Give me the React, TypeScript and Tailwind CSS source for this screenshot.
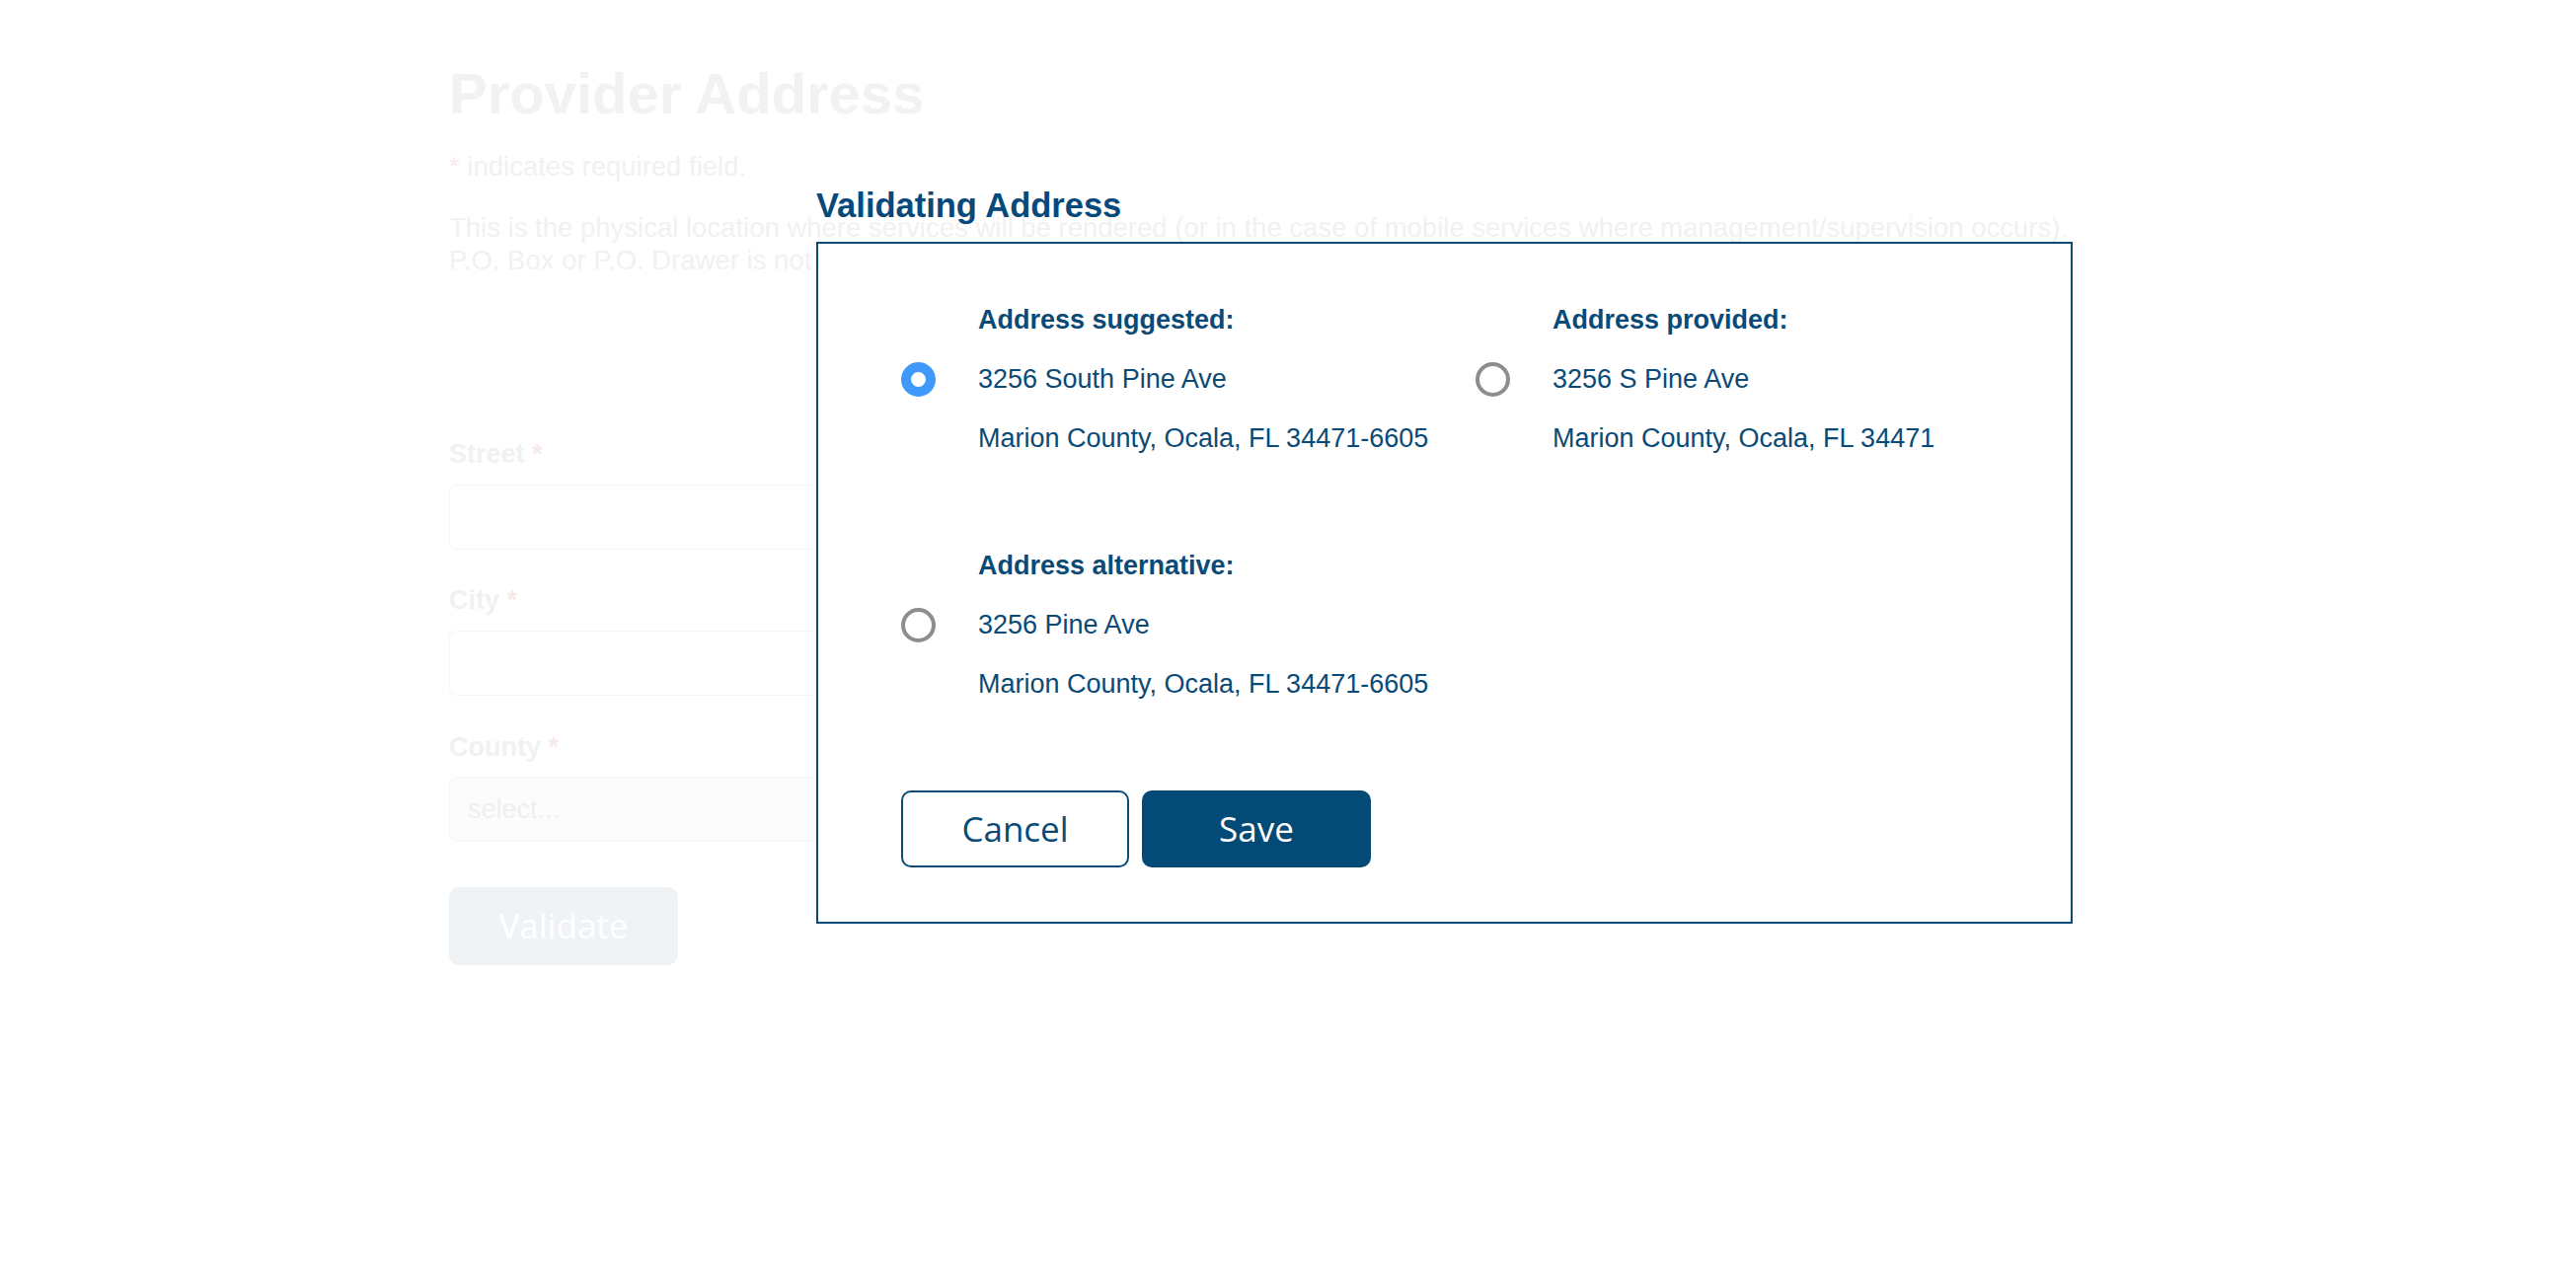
import { useState } from "react";

const addresses = [
  {
    key: "suggested",
    title: "Address suggested:",
    street: "3256 South Pine Ave",
    city: "Marion County, Ocala, FL 34471-6605",
  },
  {
    key: "provided",
    title: "Address provided:",
    street: "3256 S Pine Ave",
    city: "Marion County, Ocala, FL 34471",
  },
  {
    key: "alternative",
    title: "Address alternative:",
    street: "3256 Pine Ave",
    city: "Marion County, Ocala, FL 34471-6605",
  },
];

const sans = "font-['Liberation_Sans',Arial,sans-serif]";
const ui = "font-['Open_Sans','Noto_Sans',sans-serif]";

const FieldLabel = ({ text, className = "" }: { text: string; className?: string }) => (
  <div className={`text-[27px] leading-[33px] font-bold text-[#f1f1f1] ${className}`}>
    {text} <span className="text-[#f8e9e9]">*</span>
  </div>
);

const Radio = ({ checked, onClick }: { checked: boolean; onClick: () => void }) => (
  <button
    type="button"
    onClick={onClick}
    aria-checked={checked}
    role="radio"
    className={`mt-[73px] h-[35px] w-[35px] shrink-0 rounded-full bg-white ${
      checked ? "border-[10px] border-[#3e99fb]" : "border-[4px] border-[#8d8d8d]"
    }`}
  />
);

const AddressOption = ({
  item,
  checked,
  onSelect,
}: {
  item: (typeof addresses)[number];
  checked: boolean;
  onSelect: () => void;
}) => (
  <label className="flex w-[582px] cursor-pointer items-start gap-[43px]">
    <Radio checked={checked} onClick={onSelect} />
    <div className="text-[27px] leading-[60px] text-[#0a4a76]">
      <div className="font-bold">{item.title}</div>
      <div>{item.street}</div>
      <div>{item.city}</div>
    </div>
  </label>
);

export default function App() {
  const [selected, setSelected] = useState("suggested");

  return (
    <div className={`relative h-[1292px] w-full overflow-hidden bg-white ${sans}`}>
      {/* page behind the dialog, washed out */}
      <div className="ml-[455px] pt-[66px] select-none">
        <h1 className="text-[58px] leading-[58px] font-bold text-[#f2f2f2]">Provider Address</h1>
        <p className="mt-[28px] text-[27.5px] leading-[33px] text-[#f1f1f1]">
          <span className="text-[#f8ecec]">*</span> indicates required field.
        </p>
        <p className="mt-[29px] text-[27.5px] leading-[33px] text-[#f1f1f1]">
          This is the physical location where services will be rendered (or in the case of mobile services where
          management/supervision occurs).
          <br />
          P.O. Box or P.O. Drawer is not acceptable.
        </p>

        <FieldLabel text="Street" className="mt-[164px]" />
        <div className="mt-[14px] h-[66px] w-[1000px] rounded-[8px] border border-[#f6f6f6] bg-white" />

        <FieldLabel text="City" className="mt-[35px]" />
        <div className="mt-[14px] h-[66px] w-[1000px] rounded-[8px] border border-[#f6f6f6] bg-white" />

        <FieldLabel text="County" className="mt-[36px]" />
        <div className="mt-[13px] flex h-[66px] w-[1000px] items-center rounded-[8px] border border-[#f6f6f6] bg-[#fcfcfc] pl-[18px] text-[27px] text-[#efefef]">
          select...
        </div>

        <button
          type="button"
          className={`mt-[46px] h-[79px] w-[232px] rounded-[10px] bg-[#eff3f6] text-[35px] text-white ${ui}`}
        >
          Validate
        </button>
      </div>

      {/* dialog */}
      <div className="absolute left-[827px] top-[188px] w-[1273px]">
        <h2 className="text-[34.5px] leading-[41px] font-bold text-[#06497a]">Validating Address</h2>
        <div className="mt-[16px] border-2 border-[#0a4a76] bg-white pt-[47px] pb-[55px] pl-[84px]">
          <div className="flex">
            <AddressOption
              item={addresses[0]}
              checked={selected === "suggested"}
              onSelect={() => setSelected("suggested")}
            />
            <AddressOption
              item={addresses[1]}
              checked={selected === "provided"}
              onSelect={() => setSelected("provided")}
            />
          </div>
          <div className="mt-[69px] flex">
            <AddressOption
              item={addresses[2]}
              checked={selected === "alternative"}
              onSelect={() => setSelected("alternative")}
            />
          </div>
          <div className={`mt-[78px] flex gap-[13px] ${ui}`}>
            <button
              type="button"
              className="h-[78px] w-[231px] rounded-[10px] border-2 border-[#0a4a76] bg-white text-[35px] text-[#0a4a76]"
            >
              Cancel
            </button>
            <button
              type="button"
              className="h-[78px] w-[232px] rounded-[10px] bg-[#034a77] text-[35px] text-white"
            >
              Save
            </button>
          </div>
        </div>
      </div>
    </div>
  );
}
